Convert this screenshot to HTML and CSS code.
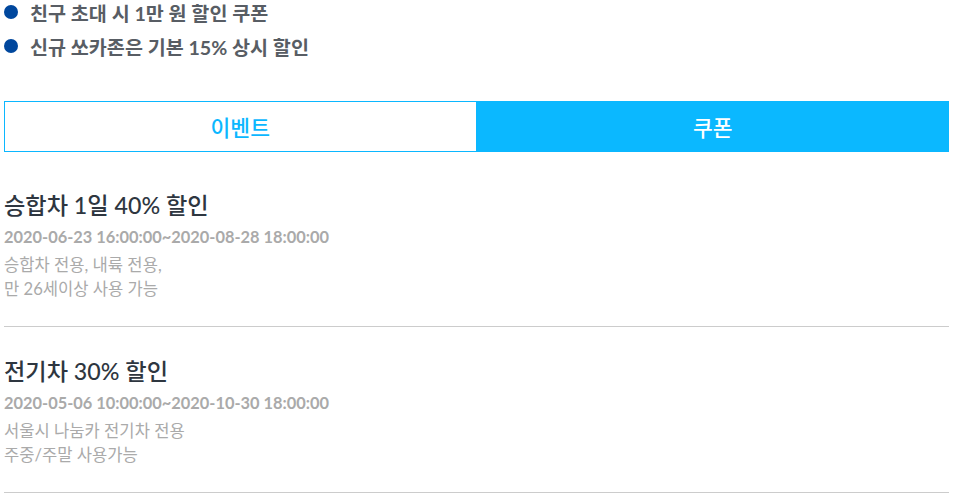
FILE: index.html
```html
<!DOCTYPE html>
<html lang="ko">
<head>
<meta charset="utf-8">
<link rel="stylesheet" href="styles.css">
</head>
<body>
<div class="page">
  <ul class="benefits">
    <li class="benefit"><span class="dot"></span>친구 초대 시 1만 원 할인 쿠폰</li>
    <li class="benefit"><span class="dot"></span>신규 쏘카존은 기본 15% 상시 할인</li>
  </ul>
  <div class="tabs">
    <div class="tab">이벤트</div>
    <div class="tab active">쿠폰</div>
  </div>
  <div class="list">
    <div class="item">
      <div class="title">승합차 1일 40% 할인</div>
      <div class="date">2020-06-23 16:00:00~2020-08-28 18:00:00</div>
      <div class="desc">승합차 전용, 내륙 전용,<br>만 26세이상 사용 가능</div>
    </div>
    <div class="item">
      <div class="title">전기차 30% 할인</div>
      <div class="date">2020-05-06 10:00:00~2020-10-30 18:00:00</div>
      <div class="desc">서울시 나눔카 전기차 전용<br>주중/주말 사용가능</div>
    </div>
  </div>
</div>
</body>
</html>
```

FILE: styles.css
```css
html, body {
  margin: 0;
  padding: 0;
  background: #fff;
}
body {
  font-family: Lato, "Noto Sans CJK KR", sans-serif;
}
.page {
  padding: 0 8px 0 4px;
}
.benefits {
  list-style: none;
  margin: 0;
  padding: 0;
  display: flex;
  flex-direction: column;
  gap: 10px;
}
.benefit {
  display: flex;
  align-items: center;
  gap: 12px;
  height: 24px;
  font-size: 19.6px;
  font-weight: 700;
  color: #585d64;
}
.dot {
  width: 14px;
  height: 14px;
  border-radius: 50%;
  background: #00479d;
  flex: none;
}
.tabs {
  margin-top: 43px;
  display: flex;
  height: 51px;
}
.tab {
  flex: 1;
  display: flex;
  align-items: center;
  justify-content: center;
  font-size: 21.5px;
  font-weight: 500;
  color: #0bb7ff;
  border: 1px solid #0bb7ff;
  box-sizing: border-box;
}
.tab.active {
  background: #0bb8ff;
  color: #fff;
}
.list {
  margin-top: 9px;
}
.item {
  padding: 30px 0 25px;
  border-bottom: 1px solid #cccccc;
}
.title {
  font-size: 23.2px;
  line-height: 28px;
  font-weight: 500;
  color: #2e3640;
}
.date {
  margin-top: 7px;
  font-size: 16.4px;
  line-height: 22px;
  font-weight: 700;
  color: #aaaaaa;
}
.desc {
  margin-top: 5px;
  font-size: 16.6px;
  line-height: 24px;
  color: #aaaaaa;
}
```
